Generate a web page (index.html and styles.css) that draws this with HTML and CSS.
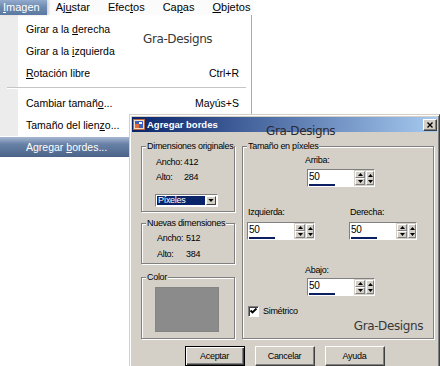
FILE: index.html
```html
<!DOCTYPE html>
<html lang="es">
<head>
    <meta charset="UTF-8">
    <title>Agregar bordes</title>
    <link rel="stylesheet" href="styles.css">
</head>
<body>
    <div class="menubar">
        <span class="menu-title active"><u>I</u>magen</span>
        <span class="menu-title">Aj<u>u</u>star</span>
        <span class="menu-title">Efec<u>t</u>os</span>
        <span class="menu-title">Ca<u>p</u>as</span>
        <span class="menu-title"><u>O</u>bjetos</span>
    </div>

    <div class="dropdown">
        <div class="menu-item"><span>Girar a la <u>d</u>erecha</span></div>
        <div class="menu-item"><span>Girar a la <u>i</u>zquierda</span></div>
        <div class="menu-item"><span><u>R</u>otación libre</span><span>Ctrl+R</span></div>
        <div class="menu-sep"></div>
        <div class="menu-item"><span>Cambiar tamañ<u>o</u>...</span><span>Mayús+S</span></div>
        <div class="menu-item"><span>Tamaño del lien<u>z</u>o...</span></div>
        <div class="menu-item selected"><span>Agregar <u>b</u>ordes...</span></div>
    </div>

    <div class="watermark wm-menu">Gra-Designs</div>

    <div class="dialog">
        <div class="titlebar">
            <svg class="title-icon" viewBox="0 0 12 11">
                <rect x="0.5" y="0.5" width="11" height="10" fill="#f3dcc0" stroke="#b8683a"/>
                <rect x="2" y="2" width="8" height="7" fill="#3a5fc0"/>
                <rect x="2" y="5" width="4" height="4" fill="#e06a3a"/>
                <rect x="6" y="3" width="3" height="2" fill="#ffffff"/>
            </svg>
            <span class="title-text">Agregar bordes</span>
            <span class="close-btn">
                <svg viewBox="0 0 14 12"><path d="M4 3l6 6M10 3l-6 6" stroke="#000" stroke-width="1.6"/></svg>
            </span>
        </div>

        <div class="dialog-body">
            <div class="left-col">
                <div class="group group-orig">
                    <span class="legend">Dimensiones originales</span>
                    <div class="dims">
                        <span>Ancho:</span><span>412</span>
                        <span>Alto:</span><span>284</span>
                    </div>
                    <div class="select">
                        <span class="select-value">Píxeles</span>
                        <span class="select-arrow">
                            <svg viewBox="0 0 7 4"><path d="M0 0h7L3.5 4z"/></svg>
                        </span>
                    </div>
                </div>

                <div class="group group-new">
                    <span class="legend">Nuevas dimensiones</span>
                    <div class="dims dims-new">
                        <span>Ancho:</span><span>512</span>
                        <span>Alto:</span><span>384</span>
                    </div>
                </div>

                <div class="group group-color">
                    <span class="legend">Color</span>
                    <div class="swatch"></div>
                </div>
            </div>

            <div class="group group-size">
                <span class="legend">Tamaño en píxeles</span>

                <div class="field field-top">
                    <span class="field-label">Arriba:</span>
                    <div class="spin">
                        <div class="spin-field"><span>50</span><i class="spin-bar"></i></div>
                        <div class="spin-arrows">
                            <span class="spin-btn"><svg viewBox="0 0 5 3"><path d="M0 3h5L2.5 0z"/></svg></span>
                            <span class="spin-btn"><svg viewBox="0 0 5 3"><path d="M0 0h5L2.5 3z"/></svg></span>
                        </div>
                        <span class="spin-extra"><svg viewBox="0 0 5 9"><path d="M0 3h5L2.5 0zM0 6h5L2.5 9z"/></svg></span>
                    </div>
                </div>

                <div class="field-row">
                    <div class="field">
                        <span class="field-label">Izquierda:</span>
                        <div class="spin">
                            <div class="spin-field"><span>50</span><i class="spin-bar"></i></div>
                            <div class="spin-arrows">
                                <span class="spin-btn"><svg viewBox="0 0 5 3"><path d="M0 3h5L2.5 0z"/></svg></span>
                                <span class="spin-btn"><svg viewBox="0 0 5 3"><path d="M0 0h5L2.5 3z"/></svg></span>
                            </div>
                            <span class="spin-extra"><svg viewBox="0 0 5 9"><path d="M0 3h5L2.5 0zM0 6h5L2.5 9z"/></svg></span>
                        </div>
                    </div>
                    <div class="field">
                        <span class="field-label">Derecha:</span>
                        <div class="spin">
                            <div class="spin-field"><span>50</span><i class="spin-bar"></i></div>
                            <div class="spin-arrows">
                                <span class="spin-btn"><svg viewBox="0 0 5 3"><path d="M0 3h5L2.5 0z"/></svg></span>
                                <span class="spin-btn"><svg viewBox="0 0 5 3"><path d="M0 0h5L2.5 3z"/></svg></span>
                            </div>
                            <span class="spin-extra"><svg viewBox="0 0 5 9"><path d="M0 3h5L2.5 0zM0 6h5L2.5 9z"/></svg></span>
                        </div>
                    </div>
                </div>

                <div class="field field-bottom">
                    <span class="field-label">Abajo:</span>
                    <div class="spin">
                        <div class="spin-field"><span>50</span><i class="spin-bar"></i></div>
                        <div class="spin-arrows">
                            <span class="spin-btn"><svg viewBox="0 0 5 3"><path d="M0 3h5L2.5 0z"/></svg></span>
                            <span class="spin-btn"><svg viewBox="0 0 5 3"><path d="M0 0h5L2.5 3z"/></svg></span>
                        </div>
                        <span class="spin-extra"><svg viewBox="0 0 5 9"><path d="M0 3h5L2.5 0zM0 6h5L2.5 9z"/></svg></span>
                    </div>
                </div>

                <label class="check-row">
                    <span class="checkbox"><svg viewBox="0 0 9 9"><path d="M1.5 3.5l2 2 4-4" fill="none" stroke="#000" stroke-width="1.8"/></svg></span>
                    <span>Simétrico</span>
                </label>

                <div class="watermark wm-dialog">Gra-Designs</div>
            </div>
        </div>

        <div class="buttons">
            <span class="button default">Aceptar</span>
            <span class="button">Cancelar</span>
            <span class="button">Ayuda</span>
        </div>
    </div>

    <div class="watermark wm-title">Gra-Designs</div>
</body>
</html>
```

FILE: styles.css
```css
:root {
    --face: #d4d0c8;
    --shadow: #808080;
    --dark: #404040;
    --navy: #0a246a;
}

* {
    box-sizing: border-box;
}

body {
    position: relative;
    width: 440px;
    height: 366px;
    margin: 0;
    overflow: hidden;
    background-color: #ffffff;
    font-family: "Liberation Sans", Arial, sans-serif;
    color: #000000;
}

/* menu */

.menubar {
    display: flex;
    width: 253px;
    height: 15px;
    background-color: #fbfbfb;
    font-size: 11px;
    line-height: 15px;
}

.menu-title {
    padding: 0 9px;
}

.menu-title:first-child {
    padding: 0 7px 0 3px;
}

.menu-title.active {
    color: #ffffff;
    background: linear-gradient(#93abcb, #6c89b1 50%, #5b78a1);
    box-shadow: 2px 0 2px #d6d6d6;
}

.dropdown {
    width: 252px;
    height: 143px;
    padding-top: 3px;
    border-right: 1px solid #a9a9a9;
    background: linear-gradient(to right, #ececec 18px, #ffffff 18px);
    font-size: 10.5px;
}

.menu-item {
    display: flex;
    justify-content: space-between;
    height: 22px;
    padding: 0 12px 0 26px;
    line-height: 22px;
}

.menu-item.selected {
    color: #ffffff;
    line-height: 20px;
    border-top: 1px solid #ffffff;
    border-bottom: 1px solid #ffffff;
    background: linear-gradient(#a8b9d1, #6882a7 35%, #4b6389);
}

.menu-sep {
    height: 8px;
    margin: 0 5px 0 7px;
    padding-top: 3px;
}

.menu-sep::before {
    content: "";
    display: block;
    border-top: 1px solid #c5c5c5;
    border-bottom: 1px solid #ffffff;
}

/* watermark text */

.watermark {
    position: absolute;
    font-family: "DejaVu Sans", sans-serif;
    font-size: 12px;
    line-height: 14px;
    letter-spacing: -0.4px;
    color: #383838;
}

.wm-menu {
    left: 143px;
    top: 32px;
}

.wm-title {
    left: 266px;
    top: 124px;
    color: #2a2a33;
}

.wm-dialog {
    right: 10px;
    bottom: 5px;
}

/* dialog window */

.dialog {
    position: absolute;
    left: 129px;
    top: 114px;
    width: 311px;
    height: 270px;
    padding: 2px;
    background-color: var(--face);
    border: 1px solid;
    border-color: var(--face) var(--dark) var(--dark) var(--face);
    box-shadow: inset 1px 1px #ffffff, inset -1px -1px var(--shadow);
    font-size: 9px;
    letter-spacing: -0.3px;
}

.titlebar {
    display: flex;
    align-items: center;
    height: 15px;
    padding-left: 1px;
    background: linear-gradient(to right, var(--navy), #a6caf0);
    color: #ffffff;
    font-weight: bold;
    font-size: 9.5px;
    letter-spacing: 0;
}

.title-icon {
    width: 12px;
    height: 11px;
    margin-right: 2px;
}

.close-btn {
    display: flex;
    width: 14px;
    height: 12px;
    margin-left: auto;
    background-color: var(--face);
    border: 1px solid;
    border-color: #ffffff var(--dark) var(--dark) #ffffff;
    box-shadow: inset -1px -1px var(--shadow);
}

.close-btn svg {
    width: 12px;
    height: 10px;
}

.dialog-body {
    display: flex;
    gap: 7px;
    padding: 14px 0 0 9px;
}

.left-col {
    display: flex;
    flex-direction: column;
    width: 94px;
}

/* group boxes */

.group {
    position: relative;
    border: 1px solid var(--shadow);
    box-shadow: inset 1px 1px #ffffff, 1px 1px #ffffff;
}

.legend {
    position: absolute;
    top: -7px;
    left: 4px;
    padding: 0 1px;
    background-color: var(--face);
    line-height: 12px;
    white-space: nowrap;
}

.group-orig {
    height: 66px;
    padding: 8px 0 0 13px;
}

.group-new {
    height: 41px;
    margin-top: 11px;
    padding: 6px 0 0 13px;
}

.group-color {
    height: 62px;
    margin-top: 13px;
    padding: 9px 0 0 13px;
}

.dims {
    display: grid;
    grid-template-columns: 28px auto;
    padding-left: 1px;
    line-height: 15px;
}

.dims-new {
    grid-template-columns: 29px auto;
    padding-left: 2px;
    line-height: 16px;
}

.select {
    display: flex;
    width: 63px;
    height: 13px;
    margin-top: 9px;
    border: 1px solid;
    border-color: var(--shadow) #ffffff #ffffff var(--shadow);
    background-color: #ffffff;
    padding: 1px;
}

.select-value {
    flex: 1;
    padding-left: 1px;
    background-color: var(--navy);
    color: #ffffff;
    line-height: 9px;
}

.select-arrow {
    display: flex;
    align-items: center;
    justify-content: center;
    width: 10px;
    margin-left: 1px;
    background-color: var(--face);
    border: 1px solid;
    border-color: #ffffff var(--dark) var(--dark) #ffffff;
}

.select-arrow svg {
    width: 6px;
    height: 3px;
}

.swatch {
    width: 64px;
    height: 45px;
    background-color: #8b8b8b;
    box-shadow: inset 0 0 0 1px #848484;
}

.group-size {
    width: 192px;
    height: 193px;
    padding: 7px 0 0 4px;
}

/* spin fields */

.field {
    display: flex;
    flex-direction: column;
    align-items: flex-start;
}

.field-top {
    margin-left: 58px;
}

.field-bottom {
    margin: 24px 0 0 58px;
}

.field-label {
    padding-left: 1px;
    line-height: 12px;
}

.field-top .field-label,
.field-bottom .field-label {
    padding-left: 0;
}

.field-top .spin {
    margin: 3px 0 0 2px;
}

.field-bottom .spin {
    margin: 2px 0 0 2px;
}

.field-row {
    display: flex;
    gap: 34px;
    margin-top: 19px;
}

.field-row .spin {
    margin-top: 4px;
}

.spin {
    display: flex;
    width: 68px;
    height: 18px;
    border: 1px solid;
    border-color: var(--shadow) #ffffff #ffffff var(--shadow);
    background-color: var(--face);
}

.spin-field {
    display: flex;
    flex-direction: column;
    width: 47px;
    padding: 1px 0 0 1px;
    background-color: #ffffff;
    font-size: 10px;
    line-height: 12px;
}

.spin-bar {
    display: block;
    width: 26px;
    height: 2px;
    margin-top: 1px;
    background-color: #0d1f63;
}

.spin-arrows {
    display: flex;
    flex-direction: column;
    width: 10px;
    margin-left: 1px;
    padding: 1px 0;
}

.spin-btn,
.spin-extra {
    display: flex;
    align-items: center;
    justify-content: center;
    background-color: var(--face);
    border: 1px solid;
    border-color: #ffffff var(--shadow) var(--shadow) #ffffff;
}

.spin-btn {
    flex: 1;
}

.spin-btn svg {
    width: 5px;
    height: 3px;
}

.spin-extra {
    width: 8px;
    margin: 1px 0 1px 1px;
}

.spin-extra svg {
    width: 5px;
    height: 9px;
}

/* checkbox */

.check-row {
    display: flex;
    align-items: center;
    gap: 4px;
    margin: 9px 0 0 1px;
    line-height: 12px;
}

.checkbox {
    display: flex;
    align-items: center;
    justify-content: center;
    width: 11px;
    height: 11px;
    background-color: #ffffff;
    border: 1px solid;
    border-color: var(--shadow) #ffffff #ffffff var(--shadow);
    box-shadow: inset 1px 1px var(--dark);
}

.checkbox svg {
    width: 9px;
    height: 9px;
}

/* buttons */

.buttons {
    display: flex;
    justify-content: center;
    gap: 10px;
    margin-top: 7px;
}

.button {
    width: 60px;
    height: 20px;
    border: 1px solid;
    border-color: #ffffff var(--dark) var(--dark) #ffffff;
    box-shadow: inset -1px -1px var(--shadow);
    text-align: center;
    line-height: 18px;
}

.button.default {
    border-color: #000000;
    box-shadow: inset 1px 1px #ffffff, inset -1px -1px var(--dark), inset -2px -2px var(--shadow);
}
```
